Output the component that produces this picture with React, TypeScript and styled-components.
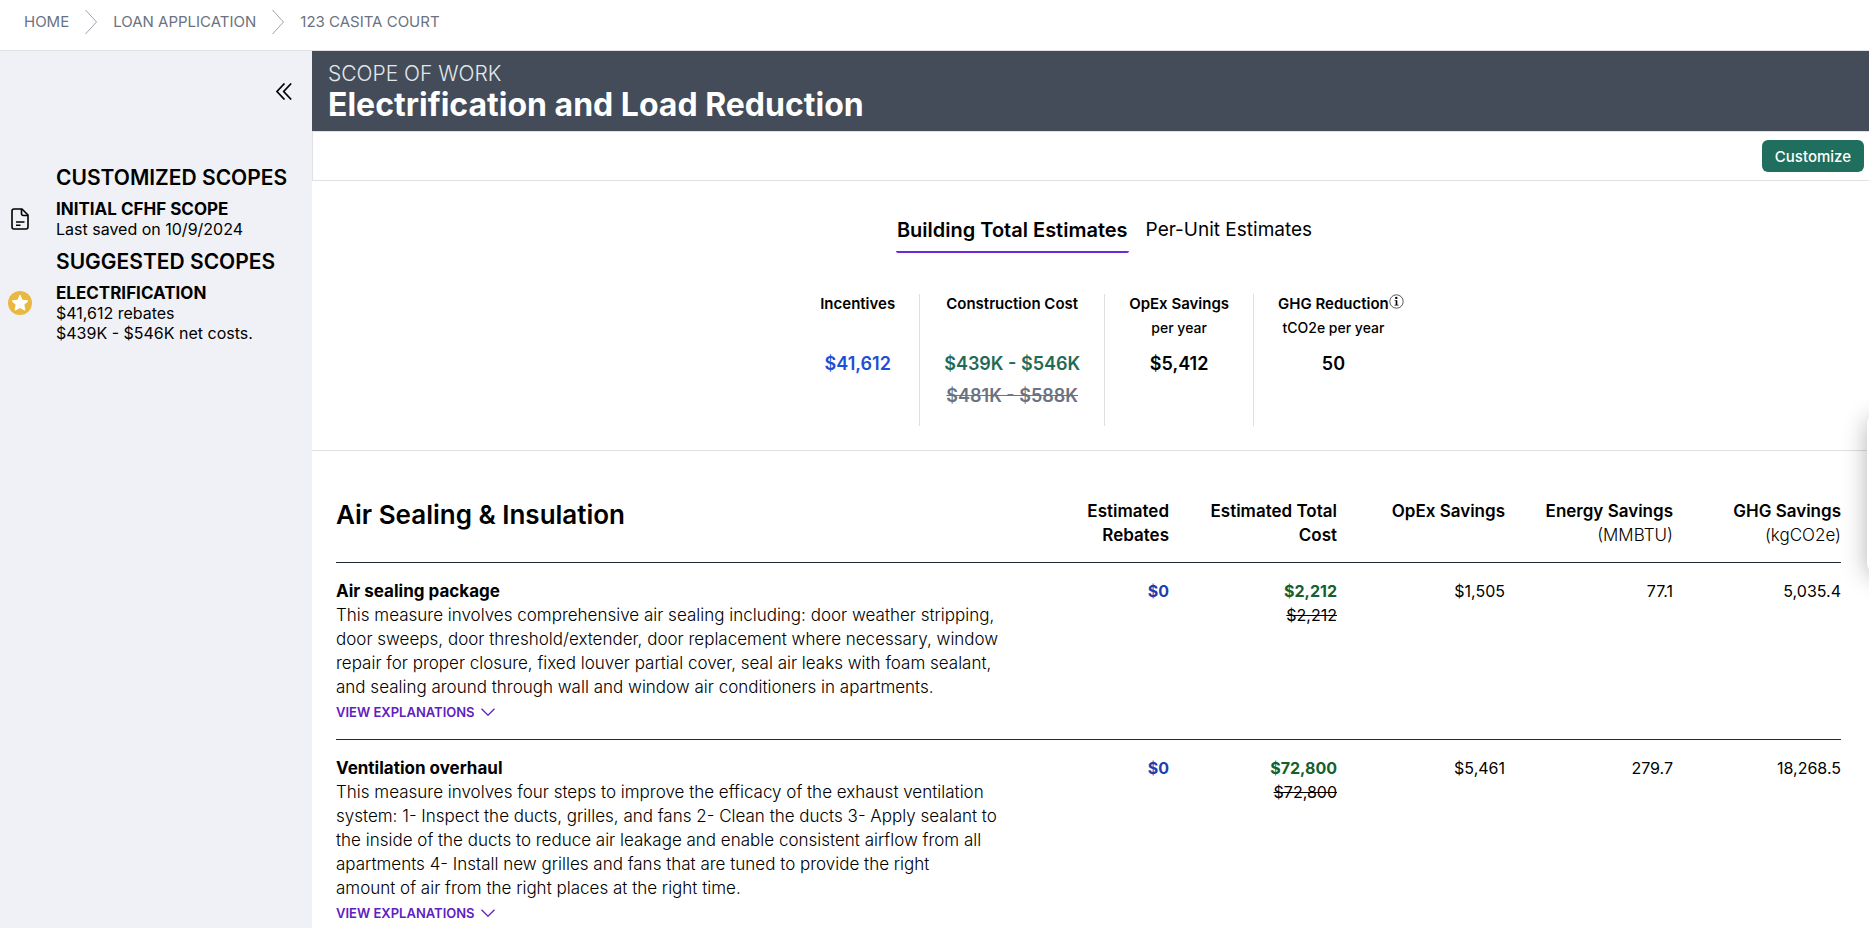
import React from 'react';
import styled, { createGlobalStyle } from 'styled-components';

const GlobalStyle = createGlobalStyle`
  *, *::before, *::after { box-sizing: border-box; }
  body {
    margin: 0;
    background: #fff;
    color: #000;
    font-family: Inter, "Open Sans", sans-serif;
    font-size: 16px;
    line-height: 24px;
  }
  h1, h2, h3, p, ol, ul { margin: 0; padding: 0; font-size: inherit; font-weight: inherit; }
  button { font-family: inherit; border: 0; background: none; padding: 0; cursor: pointer; color: inherit; }
`;

const Page = styled.div`
  height: 100vh;
  display: flex;
  flex-direction: column;
`;

const Breadcrumbs = styled.nav`
  flex: none;
  height: 51px;
  padding: 10px 24px 0;
  border-bottom: 1px solid #e0e1e6;
`;

const CrumbList = styled.ol`
  display: flex;
  align-items: center;
  gap: 16px;
  list-style: none;
`;

const Crumb = styled.li`
  display: flex;
  align-items: center;
  gap: 16px;
`;

const CrumbLink = styled.a`
  color: #6b7280;
  font-size: 15px;
  font-weight: 400;
  line-height: 24px;
  text-decoration: none;
`;

const Body = styled.div`
  flex: 1;
  min-height: 0;
  display: grid;
  grid-template-columns: 312px minmax(0, 1fr);
`;

const Sidebar = styled.aside`
  background: #f0f1f6;
  padding: 32px 20px 0 0;
`;

const CollapseRow = styled.div`
  display: flex;
  justify-content: flex-end;
  margin-bottom: 64px;
`;

const IconButton = styled.button`
  display: flex;
`;

const SidebarHeading = styled.h2`
  padding-left: 56px;
  font-size: 21px;
  font-weight: 600;
  line-height: 28px;
  white-space: nowrap;
`;

const ScopeItem = styled.a`
  display: grid;
  grid-template-columns: 56px 1fr;
  align-items: start;
  padding: 7px 0 9px;
  color: inherit;
  text-decoration: none;
  line-height: 20px;
`;

const ScopeIcon = styled.span`
  display: flex;
  width: 40px;
  height: 40px;
  align-items: center;
  justify-content: center;
`;

const ScopeName = styled.h3`
  font-size: 17px;
  font-weight: 700;
`;

const ScopeDetail = styled.p`
  font-weight: 400;
`;

const Main = styled.main`
  min-width: 0;
  overflow-y: auto;
  scrollbar-width: none;
`;

const TitleBar = styled.header`
  height: 80px;
  padding: 10px 16px 8px;
  background: #434c58;
  color: #fff;
`;

const Eyebrow = styled.p`
  font-size: 21px;
  font-weight: 300;
  line-height: 26px;
  color: #e5e7eb;
`;

const Title = styled.h1`
  font-size: 32px;
  font-weight: 700;
  line-height: 36px;
`;

const Toolbar = styled.div`
  height: 50px;
  display: flex;
  align-items: center;
  justify-content: flex-end;
  padding-right: 5px;
  border: 1px solid #e0e1e6;
  border-right: 0;
`;

const PrimaryButton = styled.button`
  height: 32px;
  padding: 0 13px;
  border-radius: 6px;
  background: #206e5e;
  color: #fff;
  font-size: 15px;
  font-weight: 500;
`;

const Overview = styled.section`
  display: flex;
  flex-direction: column;
  align-items: center;
  padding: 37px 0 24px 28px;
  border-bottom: 1px solid #e0e0e0;
`;

const Tabs = styled.div`
  display: flex;
  gap: 16px;
  margin-bottom: 41px;
`;

const Tab = styled.button<{ $active?: boolean }>`
  padding: 0 1px 9px;
  border-bottom: 2px solid ${p => (p.$active ? '#6d28d9' : 'transparent')};
  border-radius: 2px;
  font-size: ${p => (p.$active ? 20 : 19)}px;
  font-weight: ${p => (p.$active ? 600 : 400)};
  line-height: 24px;
`;

const Stats = styled.div`
  display: flex;
  height: 132px;
`;

const Stat = styled.div`
  padding: 0 24px;
  text-align: center;
  & + & { border-left: 1px solid #e0e0e0; }
`;

const StatLabel = styled.h3`
  position: relative;
  font-size: 15px;
  font-weight: 600;
  line-height: 20px;
`;

const StatUnit = styled.p`
  height: 24px;
  padding-top: 4px;
  margin-bottom: 14px;
  font-size: 14px;
  font-weight: 500;
  line-height: 20px;
`;

const StatValue = styled.p<{ $color?: string }>`
  margin-bottom: 8px;
  color: ${p => p.$color || '#000'};
  font-size: 18px;
  font-weight: 600;
`;

const StruckValue = styled(StatValue)`
  text-decoration: line-through;
`;

const InfoBadge = styled.button`
  position: absolute;
  top: 0;
  left: 100%;
  display: flex;
`;

const Measures = styled.section`
  padding: 32px 28px 0 24px;
`;

const MeasureTable = styled.table`
  width: 100%;
  table-layout: fixed;
  border-collapse: separate;
  border-spacing: 0;
`;

const NumberCol = styled.col`
  width: 168px;
`;

const HeadCell = styled.th`
  padding: 16px 0 15px 24px;
  border-bottom: 1px solid #1f2937;
  font-size: 17px;
  font-weight: 600;
  text-align: right;
  vertical-align: top;
`;

const GroupCell = styled(HeadCell)`
  padding-left: 0;
  text-align: left;
`;

const GroupTitle = styled.h2`
  font-size: 26px;
  font-weight: 600;
  line-height: 32px;
`;

const HeadUnit = styled.span`
  display: block;
  font-size: 17px;
  font-weight: 300;
`;

const Cell = styled.td`
  padding: 16px 0 14px;
  border-bottom: 1px solid #1f2937;
  font-weight: 400;
  text-align: right;
  vertical-align: top;
`;

const MeasureCell = styled(Cell)`
  text-align: left;
`;

const MeasureName = styled.h3`
  font-size: 17px;
  font-weight: 700;
`;

const Description = styled.p`
  font-size: 17px;
  font-weight: 300;
`;

const Amount = styled.strong<{ $color: string }>`
  display: block;
  color: ${p => p.$color};
  font-weight: 700;
`;

const Expand = styled.button`
  display: flex;
  align-items: center;
  gap: 6px;
  height: 26px;
  color: #6020c0;
  font-size: 13px;
  font-weight: 600;
`;

const EdgePanel = styled.div`
  position: fixed;
  top: 415px;
  right: -38px;
  width: 40px;
  height: 157px;
  border-radius: 8px 0 0 8px;
  background: #fff;
  box-shadow: 0 4px 24px rgba(0, 0, 0, 0.3);
`;

const CrumbChevron = () => (
  <svg width="12" height="24" viewBox="0 0 12 24" fill="none" stroke="#9ca3af" aria-hidden="true">
    <path d="M0.5 0 L11.5 12 L0.5 24" />
  </svg>
);

const CollapseIcon = () => (
  <svg width="16" height="17" viewBox="0 0 16 17" fill="none" stroke="#000" strokeWidth="1.7" aria-hidden="true">
    <path d="M8.5 0.5 L1 8.5 L8.5 16.5 M15.2 0.5 L7.7 8.5 L15.2 16.5" />
  </svg>
);

const DocumentIcon = () => (
  <svg width="18" height="22" viewBox="0 0 18 22" fill="none" stroke="#000" strokeWidth="1.6" strokeLinejoin="round" aria-hidden="true">
    <path d="M3 1 H11 L17 7 V19 Q17 21 15 21 H3 Q1 21 1 19 V3 Q1 1 3 1 Z" />
    <path d="M10.5 1 V5.5 Q10.5 7.5 12.5 7.5 H17" />
    <path d="M5 14 H13.5 M5 17.2 H9.5" />
  </svg>
);

const StarIcon = () => (
  <svg width="24" height="24" viewBox="0 0 24 24" aria-hidden="true">
    <circle cx="12" cy="12" r="12" fill="#e9b840" />
    <path
      d="M12 4.2 L14.3 9.2 L19.9 9.9 L15.8 13.7 L16.9 19.2 L12 16.5 L7.1 19.2 L8.2 13.7 L4.1 9.9 L9.7 9.2 Z"
      fill="#fff" stroke="#fff" strokeWidth="1" strokeLinejoin="round"
    />
  </svg>
);

const InfoIcon = () => (
  <svg width="15" height="15" viewBox="0 0 15 15" fill="none" aria-hidden="true">
    <circle cx="7.5" cy="7.5" r="6.7" stroke="#333" strokeWidth="0.8" />
    <circle cx="7.3" cy="3.9" r="1.2" fill="#000" />
    <path d="M5.6 6.3 H8.3 V10.7 H9.5 V11.5 H5.6 V10.7 H6.7 V7.1 H5.6 Z" fill="#000" />
  </svg>
);

const ExpandIcon = () => (
  <svg width="14" height="8" viewBox="0 0 14 8" fill="none" stroke="currentColor" strokeWidth="1.3" aria-hidden="true">
    <path d="M0.5 0.7 L7 7.2 L13.5 0.7" />
  </svg>
);

const crumbs = ['HOME', 'LOAN APPLICATION', '123 CASITA COURT'];

const measures = [
  {
    name: 'Air sealing package',
    text:
      'This measure involves comprehensive air sealing including: door weather stripping, door sweeps, door threshold/extender, door replacement where necessary, window repair for proper closure, fixed louver partial cover, seal air leaks with foam sealant, and sealing around through wall and window air conditioners in apartments.',
    rebate: '$0', cost: '$2,212', opex: '$1,505', energy: '77.1', ghg: '5,035.4',
  },
  {
    name: 'Ventilation overhaul',
    text:
      'This measure involves four steps to improve the efficacy of the exhaust ventilation system: 1- Inspect the ducts, grilles, and fans 2- Clean the ducts 3- Apply sealant to the inside of the ducts to reduce air leakage and enable consistent airflow from all apartments 4- Install new grilles and fans that are tuned to provide the right amount\u00a0of air from the right places at the right time.',
    rebate: '$0', cost: '$72,800', opex: '$5,461', energy: '279.7', ghg: '18,268.5',
  },
];

export default function App() {
  return (
    <Page>
      <GlobalStyle />
      <Breadcrumbs aria-label="Breadcrumb">
        <CrumbList>
          {crumbs.map((label, i) => (
            <Crumb key={label}>
              {i > 0 && <CrumbChevron />}
              <CrumbLink href="#">{label}</CrumbLink>
            </Crumb>
          ))}
        </CrumbList>
      </Breadcrumbs>
      <Body>
        <Sidebar>
          <CollapseRow>
            <IconButton aria-label="Collapse sidebar"><CollapseIcon /></IconButton>
          </CollapseRow>
          <SidebarHeading>CUSTOMIZED SCOPES</SidebarHeading>
          <ScopeItem href="#">
            <ScopeIcon><DocumentIcon /></ScopeIcon>
            <div>
              <ScopeName>INITIAL CFHF SCOPE</ScopeName>
              <ScopeDetail>Last saved on 10/9/2024</ScopeDetail>
            </div>
          </ScopeItem>
          <SidebarHeading>SUGGESTED SCOPES</SidebarHeading>
          <ScopeItem href="#">
            <ScopeIcon><StarIcon /></ScopeIcon>
            <div>
              <ScopeName>ELECTRIFICATION</ScopeName>
              <ScopeDetail>$41,612 rebates</ScopeDetail>
              <ScopeDetail>$439K - $546K net costs.</ScopeDetail>
            </div>
          </ScopeItem>
        </Sidebar>
        <Main>
          <TitleBar>
            <Eyebrow>SCOPE OF WORK</Eyebrow>
            <Title>Electrification and Load Reduction</Title>
          </TitleBar>
          <Toolbar>
            <PrimaryButton>Customize</PrimaryButton>
          </Toolbar>
          <Overview>
            <Tabs role="tablist">
              <Tab role="tab" aria-selected="true" $active>Building Total Estimates</Tab>
              <Tab role="tab" aria-selected="false">Per-Unit Estimates</Tab>
            </Tabs>
            <Stats>
              <Stat>
                <StatLabel>Incentives</StatLabel>
                <StatUnit />
                <StatValue $color="#1d4ed8">$41,612</StatValue>
              </Stat>
              <Stat>
                <StatLabel>Construction Cost</StatLabel>
                <StatUnit />
                <StatValue $color="#1f6b58">$439K - $546K</StatValue>
                <StruckValue as="s" $color="#6b7280">$481K - $588K</StruckValue>
              </Stat>
              <Stat>
                <StatLabel>OpEx Savings</StatLabel>
                <StatUnit>per year</StatUnit>
                <StatValue>$5,412</StatValue>
              </Stat>
              <Stat>
                <StatLabel>
                  GHG Reduction
                  <InfoBadge aria-label="About GHG reduction"><InfoIcon /></InfoBadge>
                </StatLabel>
                <StatUnit>tCO2e per year</StatUnit>
                <StatValue>50</StatValue>
              </Stat>
            </Stats>
          </Overview>
          <Measures>
            <MeasureTable>
              <colgroup>
                <col />
                <NumberCol /><NumberCol /><NumberCol /><NumberCol /><NumberCol />
              </colgroup>
              <thead>
                <tr>
                  <GroupCell scope="col"><GroupTitle>Air Sealing &amp; Insulation</GroupTitle></GroupCell>
                  <HeadCell scope="col">Estimated Rebates</HeadCell>
                  <HeadCell scope="col">Estimated Total Cost</HeadCell>
                  <HeadCell scope="col">OpEx Savings</HeadCell>
                  <HeadCell scope="col">Energy Savings<HeadUnit>(MMBTU)</HeadUnit></HeadCell>
                  <HeadCell scope="col">GHG Savings<HeadUnit>(kgCO2e)</HeadUnit></HeadCell>
                </tr>
              </thead>
              <tbody>
                {measures.map(m => (
                  <tr key={m.name}>
                    <MeasureCell>
                      <MeasureName>{m.name}</MeasureName>
                      <Description>{m.text}</Description>
                      <Expand aria-expanded="false">VIEW EXPLANATIONS <ExpandIcon /></Expand>
                    </MeasureCell>
                    <Cell><Amount $color="#1e3fae">{m.rebate}</Amount></Cell>
                    <Cell><Amount $color="#14602f">{m.cost}</Amount><s>{m.cost}</s></Cell>
                    <Cell>{m.opex}</Cell>
                    <Cell>{m.energy}</Cell>
                    <Cell>{m.ghg}</Cell>
                  </tr>
                ))}
              </tbody>
            </MeasureTable>
          </Measures>
        </Main>
      </Body>
      <EdgePanel />
    </Page>
  );
}
